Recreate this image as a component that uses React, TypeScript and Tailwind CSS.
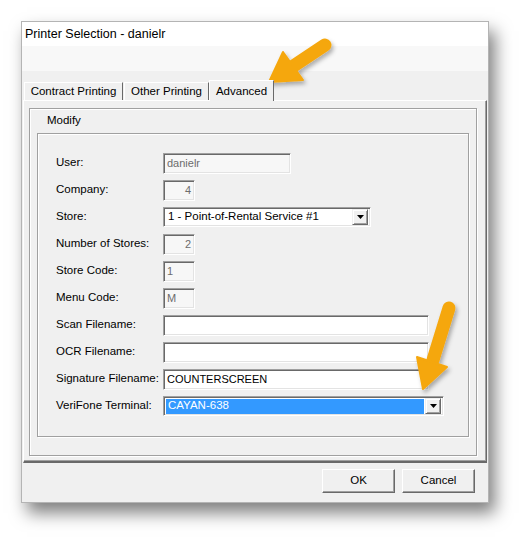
import React from "react";

const font = { fontFamily: '"Liberation Sans", Arial, sans-serif' };

function Sunken({
  w,
  h = "h-[21px]",
  ro = false,
  children,
  align = "left",
}: {
  w: string;
  h?: string;
  ro?: boolean;
  children?: React.ReactNode;
  align?: "left" | "right";
}) {
  return (
    <div
      className={`${w} ${h} border border-t-[#a0a0a0] border-l-[#a0a0a0] border-r-white border-b-white shadow-[inset_1px_1px_0_#696969,inset_-1px_-1px_0_#e3e3e3] flex items-center px-[3px] ${
        ro ? "bg-[#f7f7f7] text-[#6d6d6d]" : "bg-white text-black"
      } ${align === "right" ? "justify-end" : "justify-start"}`}
    >
      <span className="text-[11px] leading-none">{children}</span>
    </div>
  );
}

function DropBtn() {
  return (
    <div className="w-[16px] h-[16px] bg-[#f0f0f0] border border-t-[#f0f0f0] border-l-[#f0f0f0] border-r-[#696969] border-b-[#696969] shadow-[inset_1px_1px_0_#fff,inset_-1px_-1px_0_#a0a0a0] flex items-center justify-center">
      <svg width="7" height="4" viewBox="0 0 7 4">
        <polygon points="0,0 7,0 3.5,4" fill="#000" />
      </svg>
    </div>
  );
}

function Select({
  w,
  text,
  selected = false,
}: {
  w: string;
  text: string;
  selected?: boolean;
}) {
  return (
    <div
      className={`${w} h-[20px] bg-white border border-t-[#a0a0a0] border-l-[#a0a0a0] border-r-white border-b-white shadow-[inset_1px_1px_0_#696969,inset_-1px_-1px_0_#e3e3e3] flex items-center pl-[2px] pr-[2px] gap-[1px]`}
    >
      <div
        className={`flex-1 h-[15px] flex items-center pl-[2px] text-[11.5px] leading-none ${
          selected ? "bg-[#3399ff] text-white" : "text-black"
        }`}
      >
        {text}
      </div>
      <DropBtn />
    </div>
  );
}

function Row({ label, children }: { label: string; children: React.ReactNode }) {
  return (
    <div className="h-[27px] flex items-start">
      <div className="w-[107px] h-[20px] flex items-center text-[11.5px] text-black leading-none">
        {label}
      </div>
      {children}
    </div>
  );
}

function Button({ label }: { label: string }) {
  return (
    <div className="w-[73px] h-[24px] bg-[#f0f0f0] border border-t-white border-l-white border-r-[#696969] border-b-[#696969] shadow-[inset_-1px_-1px_0_#a0a0a0] flex items-center justify-center text-[11.5px] text-black">
      {label}
    </div>
  );
}

export default function App() {
  return (
    <div className="relative w-[530px] h-[545px] bg-white overflow-hidden" style={font}>
      <div className="pt-[21px] pl-[21px]">
        <div className="w-[468px] h-[482px] border border-[#b4b4b4] bg-[#f0f0f0] shadow-[6px_10px_16px_rgba(0,0,0,0.5)] flex flex-col">
          {/* Title bar */}
          <div className="h-[24px] bg-white flex items-center pl-[3px] text-[12.5px] text-black">
            Printer Selection - danielr
          </div>
          <div className="h-[25px] bg-[#f8f8f8]" />
          {/* tabs */}
          <div className="h-[29px] flex items-end pl-[2px] pt-[8px]">
            <div className="h-[18px] w-[99px] flex items-center justify-center border-t border-l border-t-white border-l-white border-r border-r-[#696969] text-[11.5px] text-black mr-[1px]">
              Contract Printing
            </div>
            <div className="h-[18px] w-[85px] flex items-center justify-center border-t border-l border-t-white border-l-white border-r border-r-[#696969] text-[11.5px] text-black">
              Other Printing
            </div>
            <div className="h-[21px] w-[65px] -mb-px relative z-10 bg-[#f0f0f0] flex items-start pt-[2px] justify-center border-t border-l border-t-white border-l-white border-r border-r-[#696969] text-[11.5px] text-black">
              Advanced
            </div>
          </div>
          {/* panel */}
          <div className="ml-[1px] w-[464px] h-[363px] border-t border-l border-t-white border-l-white border-r border-r-[#696969] border-b-2 border-b-[#696969] shadow-[inset_-1px_-1px_0_#a0a0a0] pt-[7px] pl-[5px]">
            <div className="w-[448px] h-[348px] border border-[#a0a0a0] shadow-[1px_1px_0_#fff,inset_1px_1px_0_#fff] flex flex-col pl-[7px]">
              <div className="h-[24px] flex items-center pl-[10px] text-[11.5px] text-black">
                Modify
              </div>
              <div className="w-[432px] h-[304px] border border-[#a0a0a0] shadow-[1px_1px_0_#fff,inset_1px_1px_0_#fff] pt-[19px] pl-[18px] flex flex-col">
                <Row label="User:">
                  <Sunken w="w-[128px]" ro>
                    danielr
                  </Sunken>
                </Row>
                <Row label="Company:">
                  <Sunken w="w-[32px]" ro align="right">
                    4
                  </Sunken>
                </Row>
                <Row label="Store:">
                  <Select w="w-[208px]" text="1 - Point-of-Rental Service #1" />
                </Row>
                <Row label="Number of Stores:">
                  <Sunken w="w-[32px]" ro align="right">
                    2
                  </Sunken>
                </Row>
                <Row label="Store Code:">
                  <Sunken w="w-[32px]" ro>
                    1
                  </Sunken>
                </Row>
                <Row label="Menu Code:">
                  <Sunken w="w-[32px]" ro>
                    M
                  </Sunken>
                </Row>
                <Row label="Scan Filename:">
                  <Sunken w="w-[266px]" />
                </Row>
                <Row label="OCR Filename:">
                  <Sunken w="w-[266px]" />
                </Row>
                <Row label="Signature Filename:">
                  <Sunken w="w-[266px]">COUNTERSCREEN</Sunken>
                </Row>
                <Row label="VeriFone Terminal:">
                  <Select w="w-[281px]" text="CAYAN-638" selected />
                </Row>
              </div>
            </div>
          </div>
          {/* buttons */}
          <div className="flex-1 flex justify-end items-start pt-[6px] pr-[13px] gap-[7px]">
            <Button label="OK" />
            <Button label="Cancel" />
          </div>
        </div>
      </div>

      {/* annotation arrows */}
      <svg
        className="absolute inset-0 pointer-events-none"
        width="530"
        height="545"
        viewBox="0 0 530 545"
      >
        <defs>
          <filter id="sh" x="-20%" y="-20%" width="140%" height="140%">
            <feDropShadow dx="2" dy="3" stdDeviation="2" floodColor="#000" floodOpacity="0.3" />
          </filter>
        </defs>
        <g filter="url(#sh)" fill="#f5a70f" stroke="#f5a70f">
          <line x1="325" y1="45" x2="292" y2="67" strokeWidth="13" strokeLinecap="round" />
          <polygon points="269,82 283,52 303,80" strokeWidth="2" strokeLinejoin="round" />
          <line x1="449" y1="308" x2="433" y2="360" strokeWidth="13" strokeLinecap="round" />
          <polygon points="423,389 417,357 447,367" strokeWidth="2" strokeLinejoin="round" />
        </g>
      </svg>
    </div>
  );
}
